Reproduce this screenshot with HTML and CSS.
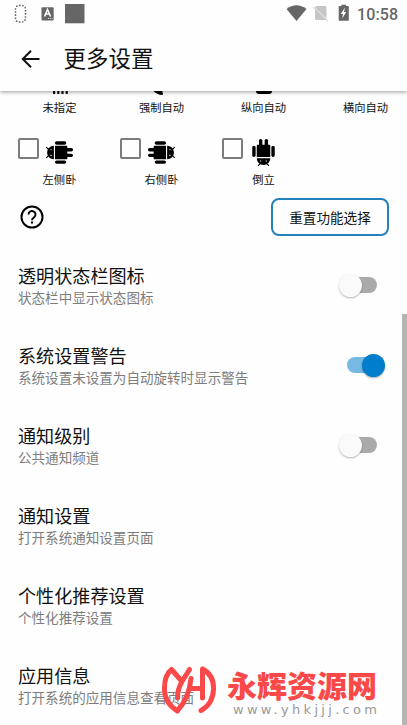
FILE: index.html
```
<!DOCTYPE html>
<html lang="zh-CN">
<head>
<meta charset="utf-8">
<title>更多设置</title>
<link rel="stylesheet" href="styles.css">
</head>
<body>
<svg class="defs" width="0" height="0">
  <symbol id="android" viewBox="0 0 24 24"><path d="M6 18c0 .55.45 1 1 1h1v3.5c0 .83.67 1.5 1.5 1.5s1.5-.67 1.5-1.5V19h2v3.5c0 .83.67 1.5 1.5 1.5s1.5-.67 1.5-1.5V19h1c.55 0 1-.45 1-1V8H6v10zM3.500 8C2.670 8 2 8.670 2 9.500v7c0 .83.67 1.500 1.500 1.500S5 17.330 5 16.500v-7C5 8.670 4.330 8 3.500 8zm17 0c-.83 0-1.500.67-1.500 1.500v7c0 .83.67 1.500 1.500 1.500s1.500-.67 1.500-1.500v-7c0-.83-.67-1.500-1.500-1.500zm-4.970-5.840l1.300-1.300c.2-.2.2-.51 0-.71-.2-.2-.51-.2-.71 0l-1.480 1.480C13.850 1.230 12.950 1 12 1c-.96 0-1.860.23-2.660.63L7.850.15c-.2-.2-.51-.2-.71 0-.2.2-.2.51 0 .71l1.310 1.310C6.970 3.260 6 5.010 6 7h12c0-1.990-.97-3.750-2.470-4.840zM10 5H9V4h1v1zm5 0h-1V4h1v1z"/></symbol>
</svg>
<div class="screen">
  <header class="header">
    <div class="status">
      <svg class="status-left" width="86" height="28" viewBox="0 0 86 28">
        <rect x="15.500" y="5.500" width="10" height="16.500" rx="3.500" fill="none" stroke="#666" stroke-width="1.500" stroke-dasharray="1.600 1.500"/>
        <rect x="41.500" y="7.200" width="12.200" height="13.300" rx="1" fill="#666"/>
        <path d="M44.500 16.500l3-7 3 7M45.700 14h3.700" fill="none" stroke="#fff" stroke-width="1.500"/>
        <path d="M48 18.500h4.500" stroke="#ddd" stroke-dasharray="1 .8"/>
        <rect x="65" y="4" width="19.500" height="19.300" fill="#666"/>
      </svg>
      <svg class="status-right" width="66" height="28" viewBox="284 0 66 28">
        <path d="M286.500 9q10-7.500 20 0l-10 12z" fill="#666"/>
        <path d="M316.500 6h8.500q1.500 0 1.500 1.500v11L315 7.500zM315 9l11 11h-9.500q-1.500 0-1.500-1.500z" fill="#c6c6c6"/>
        <path d="M313.500 7l14 14" stroke="#bbb"/>
        <path d="M339.500 6h2V4.700h4.500V6h2q.8 0 .8.800V20q0 .8-.8.800h-8.500q-.8 0-.8-.8V6.800q0-.8.800-.8z" fill="#666"/>
        <path d="M345 7.500l-4.300 6.500h2.300l-.8 4.500 4-6.500h-2.200z" fill="#fff"/>
      </svg>
      <span class="clock">10:58</span>
    </div>
    <div class="bar">
      <svg class="back" width="20" height="20" viewBox="0 0 20 20"><path d="M18.500 10H2M10 1.800L1.800 10l8.200 8.200" fill="none" stroke="#111" stroke-width="2"/></svg>
      <h1>更多设置</h1>
    </div>
  </header>
  <main>
    <div class="grid">
      <div class="cell"><span class="pic"><svg width="28" height="28" viewBox="0 0 28 28"><path d="M7 25.500h15" stroke="#111" stroke-width="3" stroke-dasharray="2.200 2"/></svg></span><span>未指定</span></div>
      <div class="cell"><span class="pic"><svg width="28" height="28" viewBox="0 0 28 28"><path d="M4 22q4 6 11 6l-1-6z"/></svg></span><span>强制自动</span></div>
      <div class="cell"><span class="pic"><svg width="28" height="28" viewBox="0 0 28 28"><rect x="6" y="2" width="16" height="25" rx="3"/></svg></span><span>纵向自动</span></div>
      <div class="cell"><span class="pic"></span><span>横向自动</span></div>
      <div class="cell"><span class="pic"><i class="check"></i><svg class="left" width="27" height="27"><use href="#android"/></svg></span><span>左侧卧</span></div>
      <div class="cell"><span class="pic"><i class="check"></i><svg class="right" width="27" height="27"><use href="#android"/></svg></span><span>右侧卧</span></div>
      <div class="cell"><span class="pic"><i class="check"></i><svg class="down" width="27" height="27"><use href="#android"/></svg></span><span>倒立</span></div>
    </div>
    <div class="tools">
      <svg width="24" height="24" viewBox="0 0 24 24"><circle cx="12" cy="12" r="10.500" fill="none" stroke="#000" stroke-width="2"/><path d="M8.500 9.500a3.500 3.500 0 1 1 5.800 2.600C12.700 13.400 12 13.800 12 15.200" fill="none" stroke="#000" stroke-width="1.900"/><rect x="11" y="16.500" width="2" height="2"/></svg>
      <button class="reset">重置功能选择</button>
    </div>
    <div class="list">
      <div class="row"><div><h2>透明状态栏图标</h2><p>状态栏中显示状态图标</p></div><i class="switch"></i></div>
      <div class="row"><div><h2>系统设置警告</h2><p>系统设置未设置为自动旋转时显示警告</p></div><i class="switch on"></i></div>
      <div class="row"><div><h2>通知级别</h2><p>公共通知频道</p></div><i class="switch"></i></div>
      <div class="row"><div><h2>通知设置</h2><p>打开系统通知设置页面</p></div></div>
      <div class="row"><div><h2>个性化推荐设置</h2><p>个性化推荐设置</p></div></div>
      <div class="row"><div><h2>应用信息</h2><p>打开系统的应用信息查看页面</p></div></div>
    </div>
  </main>
  <div class="scrollbar"></div>
  <div class="watermark">
    <svg width="58" height="50" viewBox="160 664 58 50"><g fill="none" stroke="#fb4848" stroke-width="5" stroke-linecap="round" stroke-linejoin="round"><path d="M177.500 711Q164 703 164.500 688Q164.500 675 171.500 669.500L182 681.500L189.500 669.500M182 681.500Q177.500 689 177.500 698"/><path d="M202.500 669Q214 675 213.500 689Q213 704 201 710.500M202.500 669V698M191 678.500Q189 698 178 710M191 688.500H202"/></g></svg>
    <div class="brand"><strong>永辉资源网</strong><span>www.yhkjjj.com</span></div>
  </div>
</div>
</body>
</html>
```
FILE: styles.css
```
* { box-sizing: border-box; }
body { margin: 0; background: #fefefe; color: #111; font-family: Roboto, "Noto Sans CJK SC", sans-serif; }
.defs { position: absolute; }
.screen { position: relative; width: 407px; height: 725px; overflow: hidden; }
.header { position: relative; z-index: 1; height: 91px; background: #fefefe; box-shadow: 0 1px 4px rgba(0,0,0,.4); }
.status { display: flex; height: 28px; }
.status-right { margin-left: 198px; }
.clock { margin-left: 7px; font-size: 16px; font-weight: 500; line-height: 29px; color: #666; letter-spacing: .1px; }
.bar { display: flex; align-items: center; height: 62px; padding: 0 0 0 21px; }
.bar h1 { margin: 0 0 0 22.500px; font-size: 22.500px; line-height: 32px; font-weight: 400; }
.grid { display: grid; grid-template-columns: repeat(4, 102px); grid-auto-rows: 72px; margin: -25px 0 0 8.500px; }
.cell { display: flex; flex-direction: column; align-items: center; font-size: 11.300px; line-height: 16px; }
.pic { display: flex; width: 102px; height: 29px; align-items: center; justify-content: center; position: relative; }
.cell > span:last-child { margin-top: 5.500px; }
.check { position: absolute; left: 9.500px; top: 0; width: 21px; height: 21px; border: 2px solid #7c7c7c; border-radius: 2px; }
.left { transform: rotate(-90deg); }
.right { transform: rotate(90deg); }
.down { transform: rotate(180deg); }
.tools { display: flex; align-items: center; justify-content: space-between; height: 38px; padding: 0 18px 0 20px; margin-top: -12px; }
.reset { width: 118px; height: 38px; padding: 0 0 1px; border: 2px solid #2581bb; border-radius: 8px; background: #fefefe; color: #111; font: 13.600px Roboto, "Noto Sans CJK SC", sans-serif; }
.list { margin-top: 9px; }
.row { display: flex; align-items: center; justify-content: space-between; height: 80px; padding: 0 30px 0 18px; }
.row h2 { margin: 3px 0 0; font-size: 18.100px; line-height: 24px; font-weight: 400; }
.row p { margin: -1px 0 0; font-size: 13.560px; line-height: 20px; color: #7d7d7d; }
.switch { position: relative; width: 31px; height: 16px; border-radius: 8px; background: #aaa; }
.switch::after { content: ""; position: absolute; left: -7px; top: -3.500px; width: 23px; height: 23px; border-radius: 50%; background: #fafafa; box-shadow: 0 1px 2px rgba(0,0,0,.3); }
.switch.on { margin-right: -1px; background: #76b9e2; }
.switch.on::after { left: 15px; background: #007dcc; }
.scrollbar { position: absolute; right: 0; top: 314px; width: 5px; height: 411px; background: #b4b4b4; }
.watermark { position: absolute; left: 160px; top: 664px; display: flex; }
.brand { display: flex; flex-direction: column; margin-left: 9px; color: #fb4848; white-space: nowrap; }
.brand strong { font: 900 30px/40px "Noto Sans CJK SC", sans-serif; }
.brand span { font: 13px/14px "DejaVu Sans", sans-serif; letter-spacing: 3.300px; color: #999; margin: -1px 0 0 6px; }
```
